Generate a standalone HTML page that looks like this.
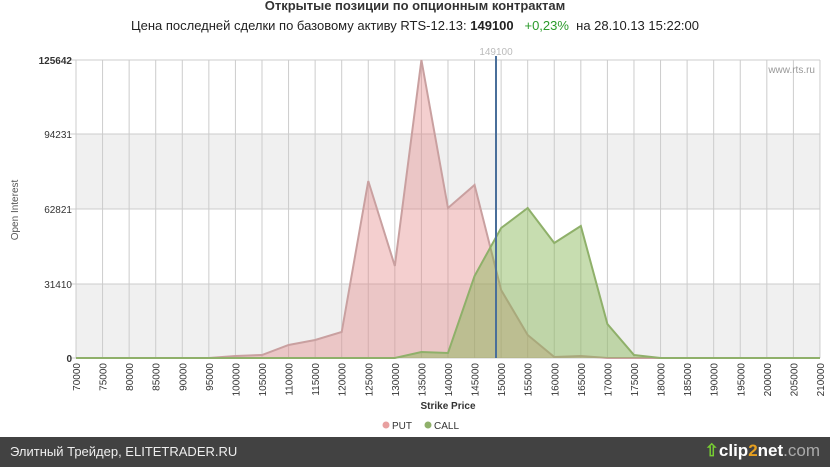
<!DOCTYPE html>
<html><head><meta charset="utf-8"><style>
html,body{margin:0;padding:0;width:830px;height:467px;overflow:hidden;background:#fff;font-family:"Liberation Sans",sans-serif}
.t1{position:absolute;left:0;width:830px;top:-2px;text-align:center;font-weight:bold;font-size:13px;color:#333}
.t2{position:absolute;left:0;width:830px;top:18px;text-align:center;font-size:13px;color:#222}
.bar{position:absolute;left:0;top:437px;width:830px;height:30px;background:#424242;color:#eee;font-size:13px}
</style></head><body>
<div class="t1">Открытые позиции по опционным контрактам</div>
<div class="t2">Цена последней сделки по базовому активу RTS-12.13: <b>149100</b> &nbsp; <span style="color:#2a9a2a">+0,23%</span> &nbsp;на 28.10.13 15:22:00</div>
<svg id="s" width="830" height="437" style="position:absolute;left:0;top:0" font-family="Liberation Sans, sans-serif"></svg>
<div class="bar"><span style="position:absolute;left:10px;top:7px">Элитный Трейдер, ELITETRADER.RU</span>
<span style="position:absolute;right:10px;top:4px;font-size:17px;font-weight:bold;color:#fff"><span style="color:#7c3">⇧</span>clip<span style="color:#e7a020">2</span>net<span style="color:#aaa;font-weight:normal">.com</span></span></div>
<script>
var s='',X=v=>76+(v-70000)/5000*26.57;
s+='<rect x="76" y="134" width="744" height="75" fill="#f0f0f0"/><rect x="76" y="284" width="744" height="74" fill="#f0f0f0"/>';
for(var v=70000;v<=210000;v+=5000){var x=X(v);s+='<line x1="'+x+'" y1="60" x2="'+x+'" y2="358" stroke="#ccc"/>';
s+='<text transform="translate('+(x+4)+',363) rotate(-90)" text-anchor="end" font-size="10" fill="#333">'+v+'</text>';}
[[60,'125642'],[134,'94231'],[209,'62821'],[284,'31410'],[358,'0']].forEach(function(a){s+='<line x1="70" y1="'+a[0]+'" x2="820" y2="'+a[0]+'" stroke="#ccc"/><text x="72" y="'+(a[0]+4)+'" text-anchor="end" font-size="10" fill="#333"'+(a[1]=='125642'||a[1]=='0'?' font-weight="bold"':'')+'>'+a[1]+'</text>';});
var put=[[70000,358],[95000,358],[100000,356],[105000,355],[110000,345],[115000,340],[120000,332],[125000,181],[130000,266],[135000,60],[140000,208],[145000,185],[150000,290],[155000,335],[160000,357],[165000,356],[170000,358],[210000,358]];
var call=[[70000,358],[130000,358],[135000,352],[140000,353],[145000,276],[150000,228],[155000,208],[160000,243],[165000,226],[170000,324],[175000,355],[180000,358],[210000,358]];
function poly(d,f,st){var p=d.map(a=>X(a[0])+','+a[1]).join(' ');return '<polygon points="'+p+' 820,358 76,358" fill="'+f+'"/><polyline points="'+p+'" fill="none" stroke="'+st+'" stroke-width="2"/>';}
s+=poly(put,'rgba(225,130,130,0.38)','#c9a0a0');
s+=poly(call,'rgba(130,180,80,0.45)','#8fb06a');
s+='<line x1="496" y1="56" x2="496" y2="358" stroke="#4a6f9a" stroke-width="2"/><text x="496" y="55" text-anchor="middle" font-size="10" fill="#bbb">149100</text>';
s+='<text x="815" y="73" text-anchor="end" font-size="10" fill="#999">www.rts.ru</text>';
s+='<text transform="translate(18,210) rotate(-90)" text-anchor="middle" font-size="10" fill="#555">Open Interest</text>';
s+='<text x="448" y="409" text-anchor="middle" font-size="10" font-weight="bold" fill="#333">Strike Price</text>';
s+='<circle cx="386" cy="425" r="3.5" fill="#e8a0a0"/><text x="392" y="429" font-size="10" fill="#333">PUT</text><circle cx="428" cy="425" r="3.5" fill="#8fb06a"/><text x="434" y="429" font-size="10" fill="#333">CALL</text>';
document.getElementById('s').innerHTML=s;
</script>
</body></html>
